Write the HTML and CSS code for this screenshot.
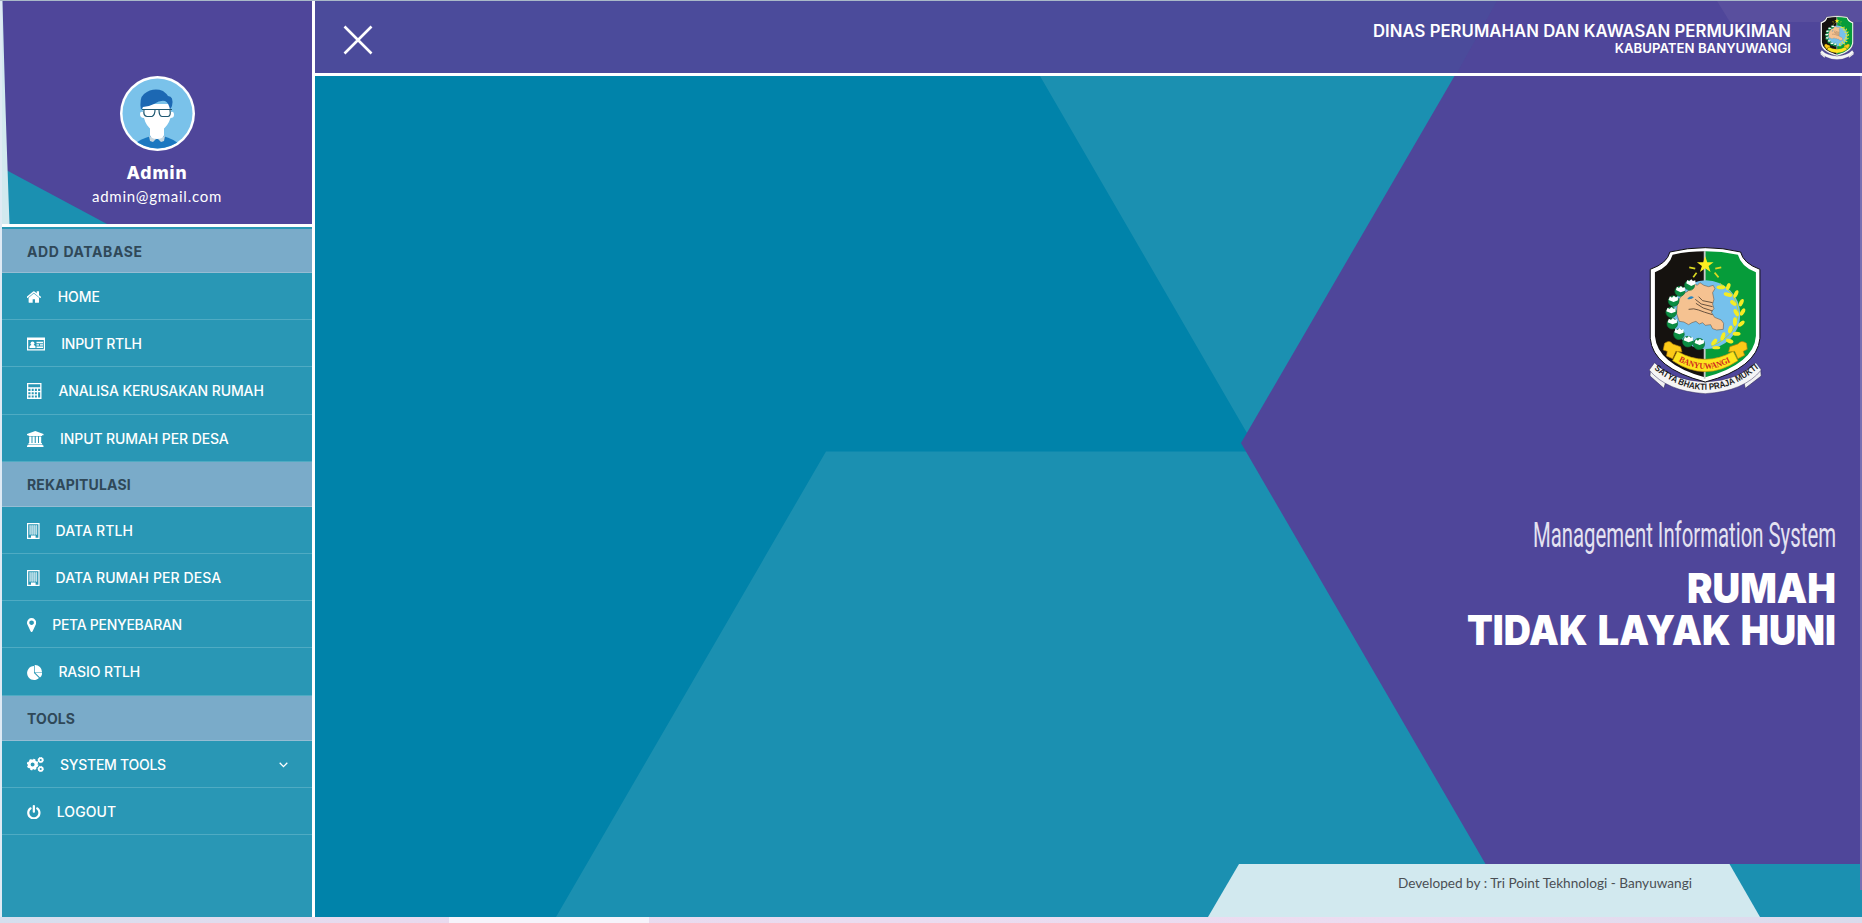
FILE: index.html
```html
<!DOCTYPE html>
<html lang="id">
<head>
<meta charset="utf-8">
<title>Management Information System</title>
<link rel="stylesheet" href="styles.css">
</head>
<body>
<svg class="defs" width="0" height="0" aria-hidden="true">
  <defs>
    <symbol id="emblem" viewBox="86 48 340 444">
      <path d="M92 414 L90 438 L132 475 L140 448Z M422 414 L424 438 L376 475 L370 448Z" fill="#f1f1f3" stroke="#3a3560" stroke-width="2"/>
      <path d="M104 398 Q152 450 256 456 Q360 450 408 398 L424 420 Q372 484 256 491 Q140 484 88 420Z" fill="#f5f5f6" stroke="#3a3560" stroke-width="1.500"/>
      <path d="M150 66 Q256 40 362 66 Q370 100 420 118 V325 Q412 414 256 456 Q98 414 91 325 V118 Q142 100 150 66Z" fill="#fff" stroke="#111" stroke-width="3"/>
      <path d="M158 74 Q208 64 254 64 V442 Q112 402 105 318 V127 Q148 110 158 74Z" fill="#15120f"/>
      <path d="M354 74 Q304 64 256 64 V442 Q402 402 408 318 V127 Q364 110 354 74Z" fill="#069c3a"/>
      <path d="M254 64V446" stroke="#c8c8c8" stroke-width="5"/>
      <circle cx="258" cy="254" r="103" fill="#76c1ec"/>
      <path d="M226 162 L232 166 240 158 252 166 266 170 280 166 285 176 278 188 282 208 278 222 282 236 274 246 284 262 304 270 311 280 310 298 290 300 278 296 272 284 256 286 248 278 238 282 228 274 216 278 206 284 192 276 178 274 170 250 172 226 180 204 192 190 204 184Z" fill="#f5c291" stroke="#5c4a3a" stroke-width="1.500"/>
      <path d="M202 207 Q210 194 222 202 Q214 210 202 207Z" fill="#2a86bd"/>
      <g fill="none" stroke="#4c3b2e" stroke-width="2.500"><path d="M236 200 L248 212 278 218"/><path d="M226 208 L244 222 278 230"/><path d="M228 220 L250 234 278 243"/><path d="M206 238 Q222 234 236 240 T278 254"/></g>
      <g fill="#0b8d43" stroke="#0a6d34" stroke-width="2"><circle cx="209" cy="166" r="15"/><circle cx="180" cy="184" r="15"/><circle cx="161" cy="213" r="16"/><circle cx="154" cy="247" r="16"/><circle cx="157" cy="281" r="16"/><circle cx="177" cy="313" r="16"/><circle cx="204" cy="335" r="16"/><circle cx="237" cy="342" r="17"/></g>
      <g fill="#fff"><path d="M199 160l3-10 6 4 6-6 5 5 7-2 1 11-13 6z"/><path d="M168 180l3-10 6 4 6-6 5 5 7-1 0 10-13 5z"/><path d="M146 210l4-11 6 4 6-6 5 5 7-1 0 10-13 5z"/><path d="M139 244l4-11 6 4 6-6 5 5 7-1 0 10-13 5z"/><path d="M143 277l4-11 6 4 6-6 5 5 7-1 0 10-13 5z"/><path d="M163 307l4-11 6 4 6-6 5 5 7-1 0 10-13 5z"/><path d="M191 331l4-11 6 4 6-6 5 5 7-1 0 10-13 5z"/><path d="M224 339l4-11 6 4 6-6 5 5 7-1 0 10-13 5z"/></g>
      <path d="M300 160 Q350 190 355 244 Q354 316 274 348" fill="none" stroke="#b9d72b" stroke-width="3"/>
      <g fill="#f6ec24"><ellipse cx="303" cy="172" rx="13" ry="6"/><ellipse cx="325" cy="170" rx="6" ry="11" transform="rotate(20 325 170)"/><ellipse cx="324" cy="194" rx="13" ry="6" transform="rotate(15 324 194)"/><ellipse cx="348" cy="192" rx="6" ry="12" transform="rotate(25 348 192)"/><ellipse cx="340" cy="219" rx="6" ry="11" transform="rotate(-50 340 219)"/><ellipse cx="364" cy="218" rx="6" ry="12" transform="rotate(25 364 218)"/><ellipse cx="349" cy="248" rx="6" ry="12" transform="rotate(-30 349 248)"/><ellipse cx="368" cy="246" rx="6" ry="12" transform="rotate(30 368 246)"/><ellipse cx="345" cy="275" rx="6" ry="13"/><ellipse cx="364" cy="281" rx="6" ry="12" transform="rotate(50 364 281)"/><ellipse cx="331" cy="298" rx="6" ry="12" transform="rotate(15 331 298)"/><ellipse cx="350" cy="311" rx="12" ry="6"/><ellipse cx="309" cy="319" rx="6" ry="13" transform="rotate(20 309 319)"/><ellipse cx="329" cy="333" rx="12" ry="6" transform="rotate(20 329 333)"/><ellipse cx="283" cy="336" rx="6" ry="12" transform="rotate(40 283 336)"/><ellipse cx="289" cy="353" rx="12" ry="5"/></g>
      <path d="M256 79 L262 97 281 97 266 108 272 126 256 115 240 126 246 108 231 97 250 97Z" fill="#fbed21"/>
      <path d="M208 112l18 4M286 116l18-4M220 142l10-14M284 128l12 14" stroke="#d9d822" stroke-width="5"/>
      <path d="M134 340 Q150 328 158 342 L182 350 186 366 168 364 158 386 140 378 142 364 130 360Z M380 340 Q364 328 354 342 L330 350 326 366 344 364 354 386 374 376 370 364 382 358Z" fill="#fcca18" stroke="#b98308" stroke-width="2"/>
      <path d="M172 364 Q256 412 340 364 L354 392 Q256 458 158 392Z" fill="#fde51f" stroke="#c48f0b" stroke-width="2"/>
    </symbol>
  </defs>
</svg>

<div class="app">
  <aside class="sidebar">
    <section class="profile">
      <svg class="profile-art" viewBox="0 0 310 223" preserveAspectRatio="none" aria-hidden="true">
        <rect width="310" height="223" fill="#4f469a"/>
        <path d="M0 168 L6 170 105 223 H0Z" fill="#1b90b1"/>
        <path d="M0 0 L.5 0 Q3 100 7.500 223 H0Z" fill="#d2e9ef"/>
      </svg>
      <svg class="avatar" viewBox="0 0 75 75" aria-hidden="true">
        <defs><clipPath id="face"><circle cx="37.500" cy="37.500" r="35"/></clipPath></defs>
        <circle cx="37.500" cy="37.500" r="37.500" fill="#fff"/>
        <g clip-path="url(#face)">
          <rect width="75" height="75" fill="#7ac2ea"/>
          <path d="M15 68 Q20 63 31 60 H43 Q54 63 60 69 V75 H15Z" fill="#1b78c0"/>
          <path d="M29 60 L37 63 45 60 44 65 41 66 37 62 33 66 30 65Z" fill="#c5d6df"/>
          <path d="M30 48 H44 V59 Q43 63 37 63 Q31 63 30 59Z" fill="#fff"/>
          <path d="M22 28 H51 V36 Q54 35 54 39 Q54 42 50.500 42 Q48 50 42 54 H32 Q26 50 24 42 Q20 42 20 38 Q20 35 23 36Z" fill="#fff"/>
          <path d="M21 34 Q19 22 24 18 Q33 11 43 15 Q47 18 48 20 Q54 20 52 30 L50 34 Q49 27 45 25 Q40 24 34 28 Q28 31 23 31Z" fill="#1c68b3"/>
          <g fill="none" stroke="#1f5872" stroke-width="1.200"><path d="M22 33.500H52M24 34 Q23 40 27 40.500H32Q35 39 35 34M39 34Q39 40 42 40.500H48Q51 40 50 34"/></g>
        </g>
      </svg>
      <strong class="profile-name">Admin</strong>
      <span class="profile-mail">admin@gmail.com</span>
    </section>

    <nav class="menu">
      <h2 class="menu-title first">ADD DATABASE</h2>
      <a class="menu-item"><svg width="14.800" height="14" viewBox="76 128 1640 1536"><path d="M1408 992v480q0 26-19 45t-45 19h-384v-384h-256v384h-384q-26 0-45-19t-19-45v-480q0-1 .5-3t.5-3l575-474 575 474q1 2 1 6zm223-69l-62 74q-8 9-21 11h-3q-13 0-21-7l-692-577-692 577q-12 8-24 7-13-2-21-11l-62-74q-8-10-7-23.500t11-21.500l719-599q32-26 76-26t76 26l244 204v-195q0-14 9-23t23-9h192q14 0 23 9t9 23v408l219 182q10 8 11 21.500t-7 23.500z"/></svg><span>HOME</span></a>
      <a class="menu-item"><svg width="18.300" height="14" viewBox="0 0 18.300 14"><path fill-rule="evenodd" d="M0 .5H18V13.500H0ZM1.200 3V12.300H16.800V3Z"/><circle cx="5.500" cy="6.300" r="1.900"/><path d="M2.500 11V9.500Q3 8 4.500 8h2Q8 8 8.500 9.500V11ZM9.500 4.800H16V6.200H9.500ZM9.500 7.200H12V8.500H9.500ZM13 7.200H16V8.500H13ZM9.500 9.600H16V11H9.500Z"/></svg><span class="tight">INPUT RTLH</span></a>
      <a class="menu-item"><svg width="15.400" height="16" viewBox="0 0 15.400 16"><path fill-rule="evenodd" d="M0 0H14.500V16H0ZM1.300 1.300V4.200H13.200V1.300ZM1.300 5.800V8H3.500V5.800ZM4.700 5.800V8H6.700V5.800ZM7.900 5.800V8H9.900V5.800ZM11.100 5.800V8H13.200V5.800ZM1.300 9.200V11.200H3.500V9.200ZM4.700 9.200V11.200H6.700V9.200ZM7.900 9.200V11.200H9.900V9.200ZM1.300 12.500V14.600H3.500V12.500ZM4.700 12.500V14.600H6.700V12.500ZM7.900 12.500V14.600H9.900V12.500ZM11.100 9.200V14.600H13.200V9.200Z"/></svg><span>ANALISA KERUSAKAN RUMAH</span></a>
      <a class="menu-item"><svg width="17.100" height="16" viewBox="0 0 17.100 16"><path d="M8.300 0L16.500 3V4.300H15V5H1.500V4.300H0V3ZM2.200 5.500H4.500V12H5.500V5.500H7.700V12H8.800V5.500H11V12H12V5.500H14.200V12H15V13.300H1.500V12H2.200ZM.7 13.800H15.800V14.600H16.500V16H0V14.600H.7Z"/></svg><span>INPUT RUMAH PER DESA</span></a>
      <h2 class="menu-title">REKAPITULASI</h2>
      <a class="menu-item"><svg width="12.600" height="16" viewBox="0 0 12.600 16"><path fill-rule="evenodd" d="M0 0H12.600V16H0ZM1.200 1.200V14.800H4V12.500H8.600V14.800H11.400V1.200Z"/><path d="M2.500 3H10.200M2.500 5H10.200M2.500 7H10.200M2.500 9H10.200M2.500 11H10.200" stroke="#fff" stroke-width="1" stroke-dasharray="1.200 .9"/><rect x="2.400" y="2.400" width="7.900" height="9" opacity=".4"/></svg><span class="wide">DATA RTLH</span></a>
      <a class="menu-item"><svg width="12.600" height="16" viewBox="0 0 12.600 16"><path fill-rule="evenodd" d="M0 0H12.600V16H0ZM1.200 1.200V14.800H4V12.500H8.600V14.800H11.400V1.200Z"/><path d="M2.500 3H10.200M2.500 5H10.200M2.500 7H10.200M2.500 9H10.200M2.500 11H10.200" stroke="#fff" stroke-width="1" stroke-dasharray="1.200 .9"/><rect x="2.400" y="2.400" width="7.900" height="9" opacity=".4"/></svg><span class="wide">DATA RUMAH PER DESA</span></a>
      <a class="menu-item"><svg width="9.200" height="14" viewBox="384 128 1024 1536"><path d="M1152 640q0-106-75-181t-181-75-181 75-75 181 75 181 181 75 181-75 75-181zm256 0q0 109-33 179l-364 774q-16 33-47.500 52t-67.500 19-67.500-19-46.500-52l-365-774q-33-70-33-179 0-212 150-362t362-150 362 150 150 362z"/></svg><span class="tight">PETA PENYEBARAN</span></a>
      <a class="menu-item"><svg width="15.400" height="15" viewBox="0 0 15.400 15"><path d="M7 1V8L12 13A7 7 0 1 1 7 1ZM7.700 0A7 7 0 0 1 15 7.300H7.700ZM8.200 7.800H15.200Q15 11 13 12.500Z"/></svg><span>RASIO RTLH</span></a>
      <h2 class="menu-title tools">TOOLS</h2>
      <a class="menu-item"><svg width="17.100" height="15" viewBox="0 0 17.100 15"><g fill="none" stroke="#fff"><circle cx="5.600" cy="7.500" r="3.500" stroke-width="3"/><circle cx="5.600" cy="7.500" r="5" stroke-width="1.500" stroke-dasharray="2.100 1.830"/><circle cx="13.700" cy="3" r="1.900" stroke-width="1.700"/><circle cx="13.700" cy="3" r="2.700" stroke-width=".8" stroke-dasharray="1.200 .92"/><circle cx="13.700" cy="12" r="1.900" stroke-width="1.700"/><circle cx="13.700" cy="12" r="2.700" stroke-width=".8" stroke-dasharray="1.200 .92"/></g></svg><span class="tight">SYSTEM TOOLS</span><svg class="chevron" width="9" height="6" viewBox="0 0 9 6"><path d="M.7 .8L4.500 4.600 8.300 .8" fill="none" stroke="#fff" stroke-width="1.300"/></svg></a>
      <a class="menu-item"><svg width="13.700" height="14.500" viewBox="128 0 1536 1664"><path d="M1664 896q0 156-61 298t-164 245-245 164-298 61-298-61-245-164-164-245-61-298q0-182 80.500-343t226.500-270q43-32 95.500-25t83.500 50q32 42 24.500 94.500t-49.500 84.500q-98 74-151.500 181t-53.500 228q0 104 40.500 198.500t109.500 163.500 163.500 109.500 198.500 40.500 198.500-40.500 163.500-109.500 109.500-163.500 40.500-198.500q0-121-53.500-228t-151.500-181q-42-32-49.500-84.500t24.500-94.500q31-43 84-50t95 25q146 109 226.500 270t80.500 343zm-640-768v640q0 52-38 90t-90 38-90-38-38-90v-640q0-52 38-90t90-38 90 38 38 90z"/></svg><span class="wide">LOGOUT</span></a>
    </nav>
  </aside>

  <div class="content">
    <header class="topbar">
      <svg class="topbar-art" viewBox="0 0 1547 72" aria-hidden="true"><path d="M1182 0 H1547 V72 H1142Z" fill="#4f469a"/><path d="M1402 0 H1547 V21 H1415Z" fill="#594f9e"/></svg>
      <svg class="close" width="30" height="30" viewBox="0 0 30 30"><path d="M1.500 1.500L28.500 28.500M28.500 1.500L1.500 28.500" stroke="#fff" stroke-width="2.600"/></svg>
      <div class="agency">
        <span class="agency-name">DINAS PERUMAHAN DAN KAWASAN PERMUKIMAN</span>
        <span class="agency-region">KABUPATEN BANYUWANGI</span>
      </div>
      <svg class="topbar-emblem" width="34" height="45"><use href="#emblem"/></svg>
    </header>
    <main class="stage">
      <svg class="stage-art" viewBox="315 76 1547 841">
        <rect x="315" y="76" width="1547" height="841" fill="#0083aa"/>
        <path d="M1040 76 H1862 V917 H556 L826 451.500 H1247 V433Z" fill="#1b90b1"/>
        <path d="M1454.500 76 H1862 V864 H1485.500 L1241 443Z" fill="#4f469a"/>
        <path d="M1239 864 H1729.500 L1760 917 H1208Z" fill="#d2e9ef"/>
        <rect x="1860" y="76" width="2" height="814" fill="#776fb2"/>
        <use href="#emblem" x="1648.500" y="246" width="113.500" height="148"/>
        <path id="ribbonCurve" d="M1678.500 361 Q1705.500 377 1733 360.500" fill="none"/>
        <path id="mottoCurve" d="M1654 369 Q1705.500 411 1758 368.500" fill="none"/>
        <text class="ribbon-text"><textPath href="#ribbonCurve" textLength="55" lengthAdjust="spacingAndGlyphs">BANYUWANGI</textPath></text>
        <text class="motto-text"><textPath href="#mottoCurve" textLength="115" lengthAdjust="spacingAndGlyphs">SATYA BHAKTI PRAJA MUKTI</textPath></text>
        <text class="art-sub" x="1533" y="547" textLength="303" lengthAdjust="spacingAndGlyphs">Management Information System</text>
        <text class="art-title" x="1687" y="602.500" textLength="149" lengthAdjust="spacingAndGlyphs">RUMAH</text>
        <text class="art-title spaced" x="1467" y="644.500" textLength="369" lengthAdjust="spacingAndGlyphs">TIDAK LAYAK HUNI</text>
        <text class="art-credit" x="1398" y="888" textLength="294" lengthAdjust="spacingAndGlyphs">Developed by : Tri Point Tekhnologi - Banyuwangi</text>
      </svg>
    </main>
  </div>
</div>
<footer class="strip"><span class="strip-tab"></span></footer>
</body>
</html>
```

FILE: styles.css
```css
* { box-sizing: border-box; }
body {
  margin: 0;
  height: 923px;
  overflow: hidden;
  display: flex;
  flex-direction: column;
  font-family: Inter, "Open Sans", sans-serif;
  color: #fff;
  background: #dfeaf4;
}
.defs { position: absolute; }
.app {
  display: flex;
  height: 917px;
  border-top: 1px solid #a9b9c8;
  padding-left: 2px;
}
.sidebar {
  width: 313px;
  flex: none;
  border-right: 3px solid #fff;
  background: #2997b5;
}
.profile {
  position: relative;
  height: 226px;
  border-bottom: 3px solid #fff;
  padding-top: 75px;
  display: flex;
  flex-direction: column;
  align-items: center;
}
.profile-art { position: absolute; inset: 0; width: 310px; height: 223px; }
.avatar { position: relative; width: 75px; height: 75px; }
.profile-name { position: relative; margin-top: 11px; font-size: 17.500px; line-height: 22px; font-weight: 800; letter-spacing: .9px; }
.profile-mail { position: relative; font: 400 15px/24px Lato, sans-serif; letter-spacing: .75px; }
.menu { padding-top: 2px; }
.menu-title {
  margin: 0;
  height: 45px;
  padding-left: 25px;
  background: #7aabc9;
  border-bottom: 1px solid #96bcd3;
  color: #2f4858;
  font-size: 14px;
  font-weight: 700;
  line-height: 46px;
  letter-spacing: .15px;
}
.menu-title.first { height: 44px; line-height: 45px; letter-spacing: .6px; }
.menu-title.tools { letter-spacing: .1px; }
.menu-item {
  height: 47.200px;
  padding: 2px 24px 0 25px;
  display: flex;
  align-items: center;
  border-bottom: 1px solid #4fabc3;
  font-size: 14px;
  font-weight: 500;
  line-height: 20px;
  white-space: nowrap;
}
.menu-item svg { fill: #fff; flex: none; }
.menu-item span { margin-left: 16px; letter-spacing: -.1px; }
.menu-item .tight { letter-spacing: -.28px; }
.menu-item .wide { letter-spacing: .1px; }
.menu-item .chevron { margin-left: auto; }
.content { flex: 1; display: flex; flex-direction: column; }
.topbar {
  position: relative;
  height: 75px;
  border-bottom: 3px solid #fff;
  background: #4b4b9b;
  display: flex;
  align-items: center;
  padding: 0 8px 0 28px;
}
.topbar-art { position: absolute; inset: 0; width: 1547px; height: 72px; }
.close, .agency, .topbar-emblem { position: relative; }
.close { margin-top: 6px; }
.agency { margin: 3px 29px 0 auto; display: flex; flex-direction: column; align-items: flex-end; white-space: nowrap; }
.agency-name { font-size: 16.700px; font-weight: 600; line-height: 19px; letter-spacing: .05px; }
.agency-region { font-size: 13.200px; font-weight: 600; line-height: 15px; }
.topbar-emblem { margin-top: 1px; }
.stage { height: 841px; }
.stage-art { display: block; width: 1547px; height: 841px; }
.art-sub { font: 400 35px Roboto, sans-serif; fill: #e4e2f1; }
.art-title { font: 900 40.500px Inter, sans-serif; fill: #fff; }
.art-title.spaced { word-spacing: 3px; }
.art-credit { font: 400 14px Lato, sans-serif; fill: #4b4f54; }
.ribbon-text { font: 700 8.500px "Liberation Serif", serif; fill: #cf1f1f; }
.motto-text { font: 700 9px "Liberation Sans", sans-serif; fill: #1c1c1c; }
.strip { height: 6px; padding-left: 449px; background: linear-gradient(90deg, #d5dfee, #e8daee 20%, #ecdcf0 75%, #dadbec); }
.strip-tab { display: block; width: 200px; height: 6px; background: #f6f3fa; }
```
